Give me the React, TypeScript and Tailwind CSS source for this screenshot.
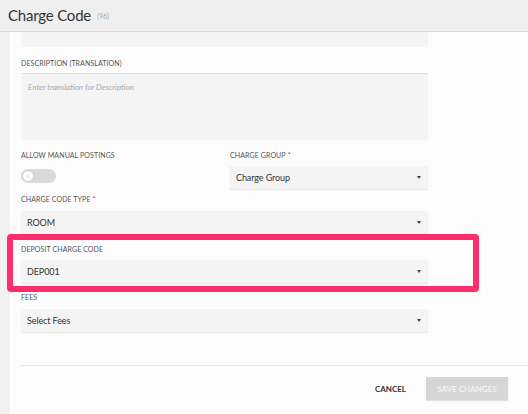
import React from "react";

const font = { fontFamily: "Lato, 'Open Sans', 'Liberation Sans', sans-serif" };

function Label({ text, required, className = "" }: { text: string; required?: boolean; className?: string }) {
  return (
    <div className={`h-[9px] text-[7px] leading-[9px] uppercase tracking-[0.1px] text-[#555] ${className}`}>
      {text}
      {required && <span className="ml-[2px] text-[#e0264a]">*</span>}
    </div>
  );
}

function Select({ value, className = "" }: { value: string; className?: string }) {
  return (
    <div
      className={`flex h-[23px] items-center justify-between bg-[#f4f4f4] pl-[6px] pr-[7px] text-[9px] tracking-[-0.1px] text-[#333] shadow-[0_1px_1px_rgba(0,0,0,0.08)] ${className}`}
    >
      <span>{value}</span>
      <span className="h-0 w-0 border-x-[2px] border-t-[3px] border-x-transparent border-t-[#444]" />
    </div>
  );
}

export default function App() {
  return (
    <div className="relative flex h-[414px] w-[528px] flex-col overflow-hidden bg-[#fcfcfc]" style={font}>
      <header className="flex h-[32px] shrink-0 items-center gap-[6px] border-b border-[#d9d9d9] bg-[#efefef] px-[8px]">
        <h1 className="text-[15px] leading-none tracking-[-0.2px] text-[#333]">Charge Code</h1>
        <span className="mt-[2px] text-[7px] text-[#aaa]">(96)</span>
      </header>

      <div className="flex flex-1">
        <div className="w-[10px] shrink-0 bg-[#f1f1f1]" />
        <main className="relative flex flex-1 flex-col pl-[11px]">
          <div className="w-[407px]">
            <div className="h-[15px] bg-[#f4f4f4]" />

            <Label text="Description (Translation)" className="mt-[12px]" />
            <div className="mt-[5px] h-[67px] border-t border-[#e2e2e2] bg-[#f4f4f4] px-[7px] pt-[7px] text-[8px] italic text-[#aaa]">
              Enter translation for Description
            </div>

            <div className="mt-[11px] grid grid-cols-2 gap-x-[11px]">
              <div>
                <Label text="Allow Manual Postings" />
                <div className="mt-[9px] flex h-[14px] w-[35px] items-center rounded-full bg-[#dadada] px-[1px]">
                  <div className="flex h-[12px] w-[12px] items-center justify-center rounded-full border border-[#cfcfcf] bg-white">
                    <div className="h-[4px] w-[4px] rounded-full bg-[#eee]" />
                  </div>
                </div>
              </div>
              <div>
                <Label text="Charge Group" required />
                <Select value="Charge Group" className="mt-[6px]" />
              </div>
            </div>

            <Label text="Charge Code Type" required className="mt-[6px]" />
            <Select value="ROOM" className="mt-[7px]" />

            <Label text="Deposit Charge Code" className="mt-[11px]" />
            <Select value="DEP001" className="mt-[6px]" />

            <Label text="Fees" className="mt-[10px]" />
            <Select value="Select Fees" className="mt-[7px]" />
          </div>

          <div className="mt-[33px] border-t border-[#e6e6e6]" />

          <div className="mt-[11px] flex items-center justify-end gap-[20px] pr-[20px]">
            <button className="text-[8px] font-bold uppercase text-[#333]">Cancel</button>
            <button className="h-[23px] w-[82px] bg-[#d6d6d6] text-[8px] font-bold uppercase text-[#f2f2f2] shadow-[0_1px_1px_rgba(0,0,0,0.1)]">
              Save Changes
            </button>
          </div>
        </main>
      </div>

      <div className="pointer-events-none absolute left-[7px] top-[234px] h-[58px] w-[472px] rounded-[4px] border-[6px] border-[#ff2d6c]" />
    </div>
  );
}
